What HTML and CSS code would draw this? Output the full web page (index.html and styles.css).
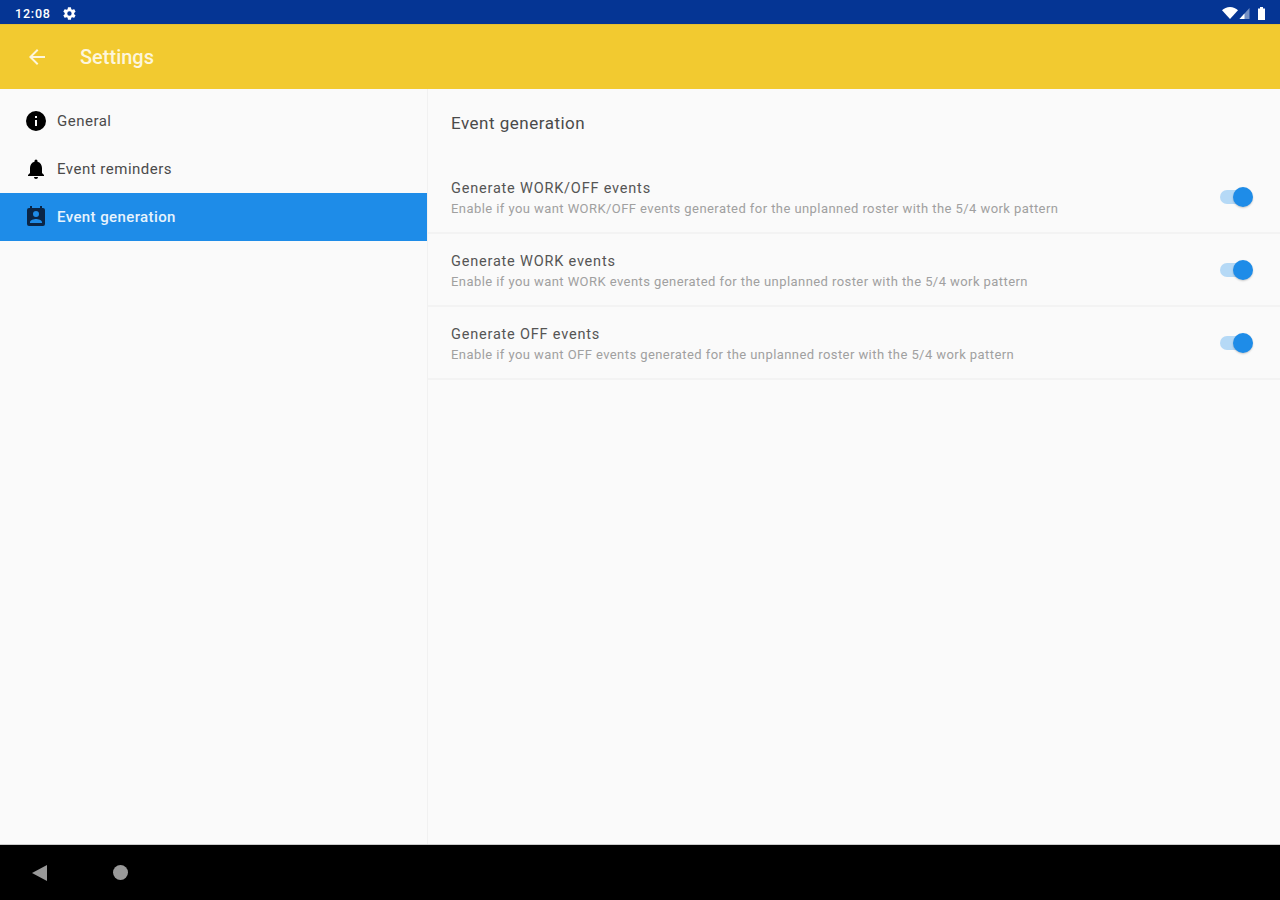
FILE: index.html
```html
<!DOCTYPE html>
<html lang="en">
<head>
    <meta charset="UTF-8">
    <title>Settings</title>
    <link rel="stylesheet" href="styles.css">
</head>
<body>
    <div class="status-bar">
        <div class="status-left">
            <span class="clock">12:08</span>
            <svg class="gear" width="15" height="15" viewBox="0 0 24 24"><path fill="#fff" d="M19.4 13c.04-.33.06-.66.06-1s-.02-.67-.06-1l2.1-1.65a.5.5 0 0 0 .12-.64l-2-3.46a.5.5 0 0 0-.61-.22l-2.49 1a7.3 7.3 0 0 0-1.73-1l-.38-2.65A.5.5 0 0 0 13.9 2h-4a.5.5 0 0 0-.49.42l-.38 2.65c-.62.25-1.2.59-1.73 1l-2.49-1a.5.5 0 0 0-.61.22l-2 3.46a.5.5 0 0 0 .12.64L4.42 11c-.04.33-.06.67-.06 1s.02.67.06 1l-2.1 1.65a.5.5 0 0 0-.12.64l2 3.46c.13.22.39.3.61.22l2.49-1c.53.41 1.11.75 1.73 1l.38 2.65c.04.24.25.42.49.42h4c.24 0 .45-.18.49-.42l.38-2.65c.62-.25 1.2-.59 1.73-1l2.49 1c.22.08.48 0 .61-.22l2-3.46a.5.5 0 0 0-.12-.64L19.4 13zM11.9 15.5a3.5 3.5 0 1 1 0-7 3.5 3.5 0 0 1 0 7z"/></svg>
        </div>
        <div class="status-right">
            <svg class="wifi" width="16" height="12" viewBox="0 0 16 12"><path fill="#fff" d="M0 3.200C2 1.300 4.800 0 8 0s6 1.300 8 3.200L8 12z"/></svg>
            <svg class="signal" width="11" height="11" viewBox="0 0 10 11"><path fill="#fff" opacity=".45" d="M10 0v11H0z"/><path fill="#fff" d="M5 5.500V11H0z"/></svg>
            <svg width="7" height="13" viewBox="0 0 7 13"><path fill="#fff" d="M2 0h3v1.500h2V13H0V1.500h2z"/></svg>
        </div>
    </div>

    <div class="app-bar">
        <svg class="back" width="24" height="24" viewBox="0 0 24 24"><path fill="#fdf6dc" d="M20 11H7.830l5.590-5.590L12 4l-8 8 8 8 1.410-1.410L7.830 13H20z"/></svg>
        <h1 class="app-title">Settings</h1>
    </div>

    <div class="main">
        <nav class="sidebar">
            <div class="nav-item">
                <svg width="24" height="24" viewBox="0 0 24 24"><path d="M12 2a10 10 0 1 0 0 20 10 10 0 0 0 0-20zm1 15h-2v-6h2zm0-8h-2V7h2z"/></svg>
                <span>General</span>
            </div>
            <div class="nav-item">
                <svg width="24" height="24" viewBox="0 0 24 24"><path d="M12 22c1.100 0 2-.9 2-2h-4c0 1.100.9 2 2 2zm6-6v-5c0-3.070-1.630-5.640-4.500-6.320V4a1.500 1.500 0 0 0-3 0v.68C7.640 5.360 6 7.920 6 11v5l-2 2v1h16v-1z"/></svg>
                <span>Event reminders</span>
            </div>
            <div class="nav-item active">
                <svg width="24" height="24" viewBox="0 0 24 24"><path fill="#0b2545" d="M19 3h-1V1h-2v2H8V1H6v2H5a2 2 0 0 0-2 2v14a2 2 0 0 0 2 2h14a2 2 0 0 0 2-2V5a2 2 0 0 0-2-2zm-7 3a3 3 0 1 1 0 6 3 3 0 0 1 0-6zm6 12H6v-1c0-2 4-3.100 6-3.100s6 1.100 6 3.100z"/></svg>
                <span>Event generation</span>
            </div>
        </nav>

        <section class="content">
            <h2 class="section-title">Event generation</h2>
            <div class="setting">
                <div class="setting-text">
                    <div class="setting-name">Generate WORK/OFF events</div>
                    <div class="setting-desc">Enable if you want WORK/OFF events generated for the unplanned roster with the 5/4 work pattern</div>
                </div>
                <div class="switch"><div class="knob"></div></div>
            </div>
            <div class="setting">
                <div class="setting-text">
                    <div class="setting-name">Generate WORK events</div>
                    <div class="setting-desc">Enable if you want WORK events generated for the unplanned roster with the 5/4 work pattern</div>
                </div>
                <div class="switch"><div class="knob"></div></div>
            </div>
            <div class="setting">
                <div class="setting-text">
                    <div class="setting-name">Generate OFF events</div>
                    <div class="setting-desc">Enable if you want OFF events generated for the unplanned roster with the 5/4 work pattern</div>
                </div>
                <div class="switch"><div class="knob"></div></div>
            </div>
        </section>
    </div>

    <div class="nav-bar">
        <div class="nav-back"></div>
        <div class="nav-home"></div>
    </div>
</body>
</html>
```
FILE: styles.css
```css
* {
    box-sizing: border-box;
    margin: 0;
    padding: 0;
}

body {
    font-family: Roboto, sans-serif;
    display: flex;
    flex-direction: column;
    height: 900px;
    overflow: hidden;
    background-color: #fafafa;
}

.status-bar {
    display: flex;
    justify-content: space-between;
    align-items: center;
    height: 24px;
    padding: 2px 15px 0;
    background-color: #053594;
    color: #fff;
}

.status-left,
.status-right {
    display: flex;
    align-items: center;
}

.clock {
    width: 47px;
    font-size: 12.500px;
    font-weight: 500;
    letter-spacing: 0.8px;
}

.wifi {
    margin-right: 1px;
}

.signal {
    margin-right: 8px;
}

.app-bar {
    display: flex;
    align-items: center;
    height: 65px;
    padding-left: 25px;
    background-color: #f2ca30;
    border-top: 1px solid #e8c030;
}

.app-title {
    margin-left: 31px;
    font-size: 20px;
    font-weight: 500;
    color: #fdf6dc;
}

.main {
    display: flex;
    flex: 1;
}

.sidebar {
    width: 428px;
    padding-top: 8px;
    border-right: 1px solid #f1f1f1;
}

.nav-item {
    display: flex;
    align-items: center;
    gap: 9px;
    height: 48px;
    padding-left: 24px;
    font-size: 15px;
    letter-spacing: 0.5px;
    color: #4a4a4a;
}

.nav-item.active {
    background-color: #1e8ce8;
    color: #e6f3fd;
    font-weight: 500;
    letter-spacing: 0.4px;
}

.content {
    flex: 1;
}

.section-title {
    height: 72px;
    padding: 23px 0 0 23px;
    font-size: 17px;
    font-weight: 400;
    line-height: 22px;
    letter-spacing: 0.5px;
    color: #4a4a4a;
}

.setting {
    display: flex;
    justify-content: space-between;
    align-items: center;
    height: 73px;
    padding: 0 28px 0 23px;
    border-bottom: 2px solid #f3f3f3;
}

.setting-text {
    margin-top: 4px;
}

.setting-name {
    font-size: 14.500px;
    line-height: 20px;
    letter-spacing: 0.8px;
    color: #555;
}

.setting-desc {
    font-size: 13px;
    line-height: 20px;
    letter-spacing: 0.43px;
    color: #a0a0a0;
}

.switch {
    position: relative;
    width: 32px;
    height: 14px;
    border-radius: 7px;
    background-color: #b5d9f6;
}

.knob {
    position: absolute;
    top: -3px;
    right: -1px;
    width: 20px;
    height: 20px;
    border-radius: 50%;
    background-color: #1e8ce8;
    box-shadow: 0 1px 2px rgba(0,0,0,0.2);
}

.nav-bar {
    display: flex;
    align-items: center;
    height: 56px;
    padding-left: 32px;
    background-color: #000;
    border-top: 1px solid #ccc;
}

.nav-back {
    width: 0;
    height: 0;
    border-top: 8px solid transparent;
    border-bottom: 8px solid transparent;
    border-right: 15px solid #999;
}

.nav-home {
    width: 15px;
    height: 15px;
    margin-left: 66px;
    border-radius: 50%;
    background-color: #999;
}
```
